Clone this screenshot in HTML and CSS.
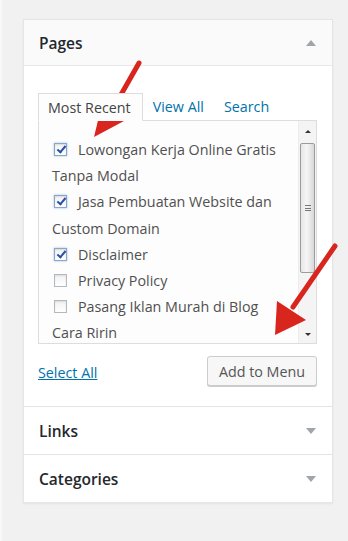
FILE: index.html
```html
<!DOCTYPE html>
<html lang="en">
<head>
    <meta charset="UTF-8">
    <title>Menus - Pages</title>
    <link rel="stylesheet" href="styles.css">
</head>
<body>
    <div class="page">
        <div class="accordion">
            <!-- Pages section (open) -->
            <div class="section open">
                <div class="section-head">
                    <h3>Pages</h3>
                    <span class="toggle up"></span>
                </div>
                <div class="section-body">
                    <ul class="tabs">
                        <li class="tab active">Most Recent</li>
                        <li class="tab"><a href="#">View All</a></li>
                        <li class="tab"><a href="#">Search</a></li>
                    </ul>
                    <div class="tab-panel">
                        <ul class="checklist">
                            <li><label><span class="cb checked"></span>Lowongan Kerja Online Gratis Tanpa Modal</label></li>
                            <li><label><span class="cb checked"></span>Jasa Pembuatan Website dan Custom Domain</label></li>
                            <li><label><span class="cb checked"></span>Disclaimer</label></li>
                            <li><label><span class="cb"></span>Privacy Policy</label></li>
                            <li><label><span class="cb"></span>Pasang Iklan Murah di Blog</label></li>
                            <li><label>Cara Ririn</label></li>
                        </ul>
                        <div class="scrollbar">
                            <span class="sb-arrow sb-up"></span>
                            <div class="sb-track">
                                <div class="sb-thumb"><span class="grip"></span></div>
                            </div>
                            <span class="sb-arrow sb-down"></span>
                        </div>
                    </div>
                    <div class="actions">
                        <a href="#" class="select-all">Select All</a>
                        <button class="button">Add to Menu</button>
                    </div>
                </div>
            </div>

            <div class="section">
                <div class="section-head plain">
                    <h3>Links</h3>
                    <span class="toggle down"></span>
                </div>
            </div>

            <div class="section">
                <div class="section-head plain">
                    <h3>Categories</h3>
                    <span class="toggle down"></span>
                </div>
            </div>
        </div>

        <!-- Red annotation arrows drawn over the screenshot -->
        <svg class="annotations" width="348" height="541" viewBox="0 0 348 541">
            <line x1="137" y1="63" x2="108" y2="114" stroke="#d8251d" stroke-width="5" stroke-linecap="round"/>
            <polygon points="92,137 100,104 122,121" fill="#d8251d"/>
            <line x1="333" y1="246" x2="291" y2="307" stroke="#d8251d" stroke-width="5" stroke-linecap="round"/>
            <polygon points="273,335 275,301 304,320" fill="#d8251d"/>
        </svg>
    </div>
</body>
</html>
```

FILE: styles.css
```css
/* Reset */
* {
    box-sizing: border-box;
    margin: 0;
    padding: 0;
}

body {
    font-family: 'Open Sans', 'Noto Sans', sans-serif;
    background-color: #f1f1f1;
    color: #444444;
    width: 348px;
    height: 541px;
    overflow: hidden;
}

.page {
    position: relative;
    height: 541px;
    padding: 19px 15px 0 23px;
    border-left: 2px solid #f8f8f8;
}

/* Accordion panel */
.accordion {
    width: 310px;
    margin-left: -2px;
    background-color: #ffffff;
    border: 1px solid #e5e5e5;
    box-shadow: 0 1px 2px rgba(0, 0, 0, 0.06);
}

.section + .section {
    border-top: 1px solid #e4e4e4;
}

.section-head {
    display: flex;
    justify-content: space-between;
    align-items: center;
    height: 46px;
    padding: 0 16px 0 15px;
    background-color: #fafafa;
    border-bottom: 1px solid #e8e8e8;
}

.section-head.plain {
    height: 47px;
    background-color: #ffffff;
    border-bottom: none;
}

.section-head h3 {
    font-size: 15.5px;
    font-weight: 600;
    color: #23282d;
}

.toggle {
    width: 0;
    height: 0;
    border-left: 5px solid transparent;
    border-right: 5px solid transparent;
}

.toggle.up {
    border-bottom: 6px solid #a0a5aa;
}

.toggle.down {
    border-top: 6px solid #a0a5aa;
}

.section-body {
    padding: 27px 15px 20px 14px;
}

/* Tabs */
.tabs {
    list-style: none;
    display: flex;
    align-items: flex-end;
    position: relative;
    z-index: 1;
    margin-bottom: -1px;
}

.tab {
    font-size: 14.3px;
    line-height: 27px;
    padding: 0 10px;
    height: 28px;
}

.tab.active {
    color: #444444;
    background-color: #fdfdfd;
    border: 1px solid #dddddd;
    border-bottom-color: #fdfdfd;
    padding: 0 11px 0 9px;
}

.tab a {
    color: #0073aa;
    text-decoration: none;
}

.tab-panel {
    display: flex;
    height: 224px;
    background-color: #fdfdfd;
    border: 1px solid #dddddd;
    overflow: hidden;
}

/* Checklist */
.checklist {
    list-style: none;
    flex: 1;
    padding: 16px 4px 0 13px;
    font-size: 14.3px;
    line-height: 26.2px;
    color: #505050;
}

.checklist label {
    display: block;
}

.cb {
    display: inline-block;
    width: 13px;
    height: 13px;
    margin: 0 11px 0 2px;
    vertical-align: -1px;
    background: linear-gradient(#f2f2f2, #ffffff);
    border: 1px solid #b4b9be;
    box-shadow: inset 0 1px 2px rgba(0, 0, 0, 0.1);
    position: relative;
}

.cb.checked {
    border-color: #8fa4c8;
    box-shadow: 0 0 2px rgba(30, 140, 190, 0.5), inset 0 1px 2px rgba(0, 0, 0, 0.1);
}

.cb.checked::after {
    content: "";
    position: absolute;
    left: 4px;
    top: 0;
    width: 3px;
    height: 7px;
    border-right: 2px solid #2a4fa8;
    border-bottom: 2px solid #2a4fa8;
    transform: rotate(40deg);
}

/* Fake classic scrollbar */
.scrollbar {
    width: 18px;
    display: flex;
    flex-direction: column;
    align-items: center;
    background-color: #f4f4f4;
    border-left: 1px solid #ececec;
}

.sb-arrow {
    width: 0;
    height: 0;
    border-left: 3px solid transparent;
    border-right: 3px solid transparent;
}

.sb-up {
    margin: 9px 0 10px;
    border-bottom: 3px solid #333333;
}

.sb-down {
    margin: 6px 0 7px;
    border-top: 3px solid #333333;
}

.sb-track {
    flex: 1;
    width: 100%;
    padding: 0 1px;
}

.sb-thumb {
    height: 130px;
    border: 1px solid #9c9c9c;
    border-radius: 2px;
    background: linear-gradient(to right, #e6e6e6, #f6f6f6 45%, #d8d8d8);
    display: flex;
    align-items: center;
    justify-content: center;
}

.grip {
    width: 6px;
    height: 6px;
    border-top: 1px solid #777777;
    border-bottom: 1px solid #777777;
    position: relative;
}

.grip::after {
    content: "";
    position: absolute;
    left: 0;
    right: 0;
    top: 1.5px;
    height: 1px;
    background-color: #777777;
}

/* Footer actions */
.actions {
    display: flex;
    justify-content: space-between;
    align-items: center;
    margin-top: 12px;
}

.select-all {
    color: #0073aa;
    font-size: 14.3px;
    text-decoration: underline;
    margin-top: 2px;
}

.button {
    font-family: inherit;
    font-size: 14.3px;
    color: #555555;
    height: 30px;
    padding: 0 11px;
    background-color: #f7f7f7;
    border: 1px solid #cccccc;
    border-radius: 3px;
    box-shadow: 0 1px 0 #cccccc;
}

/* Annotation overlay */
.annotations {
    position: absolute;
    top: 0;
    left: 0;
}
```
